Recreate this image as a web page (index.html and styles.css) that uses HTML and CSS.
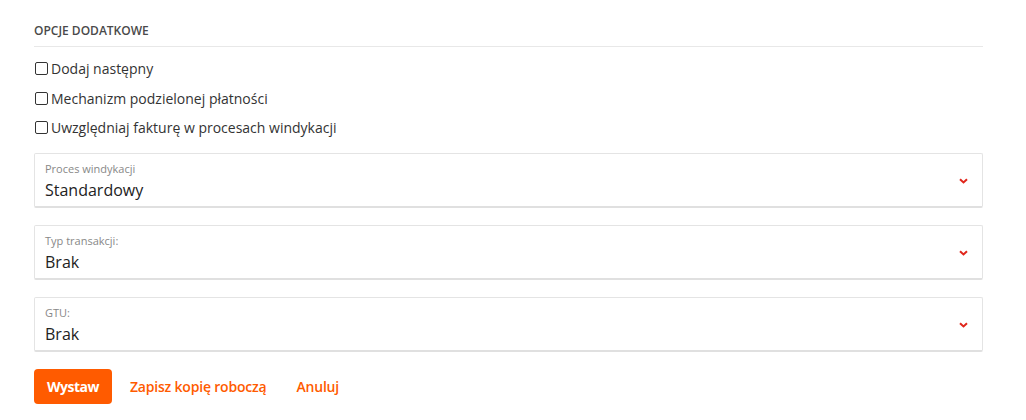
FILE: index.html
```html
<!DOCTYPE html>
<html lang="pl">
<head>
<meta charset="utf-8">
<link rel="stylesheet" href="styles.css">
</head>
<body>
<div class="panel">
  <h3 class="section-title">Opcje dodatkowe</h3>
  <div class="checks">
    <label class="check"><span class="box"></span>Dodaj następny</label>
    <label class="check"><span class="box"></span>Mechanizm podzielonej płatności</label>
    <label class="check"><span class="box"></span>Uwzględniaj fakturę w procesach windykacji</label>
  </div>
  <div class="selects">
    <div class="select">
      <div class="select-text">
        <div class="select-label">Proces windykacji</div>
        <div class="select-value">Standardowy</div>
      </div>
      <svg class="chev" width="9" height="6" viewBox="0 0 9 6"><path d="M1 1.2 L4.5 4.5 L8 1.2" fill="none" stroke="#e0261c" stroke-width="2"/></svg>
    </div>
    <div class="select">
      <div class="select-text">
        <div class="select-label">Typ transakcji:</div>
        <div class="select-value">Brak</div>
      </div>
      <svg class="chev" width="9" height="6" viewBox="0 0 9 6"><path d="M1 1.2 L4.5 4.5 L8 1.2" fill="none" stroke="#e0261c" stroke-width="2"/></svg>
    </div>
    <div class="select">
      <div class="select-text">
        <div class="select-label">GTU:</div>
        <div class="select-value">Brak</div>
      </div>
      <svg class="chev" width="9" height="6" viewBox="0 0 9 6"><path d="M1 1.2 L4.5 4.5 L8 1.2" fill="none" stroke="#e0261c" stroke-width="2"/></svg>
    </div>
  </div>
  <div class="actions">
    <button class="btn-primary">Wystaw</button>
    <a class="link-btn draft">Zapisz kopię roboczą</a>
    <a class="link-btn">Anuluj</a>
  </div>
</div>
</body>
</html>
```
FILE: styles.css
```css
* { box-sizing: border-box; }
html, body { margin: 0; padding: 0; background: #fff; }
body { font-family: "Open Sans", "Noto Sans", sans-serif; color: #333; }
.panel {
  width: 949px;
  margin-left: 34px;
  padding-top: 23px;
}
.section-title {
  margin: 0;
  font-size: 12px;
  line-height: 16px;
  font-weight: 600;
  text-transform: uppercase;
  color: #4a4a4a;
  padding-bottom: 7px;
  border-bottom: 1px solid #e8e8e8;
}
.checks {
  padding-top: 7px;
  display: flex;
  flex-direction: column;
}
.check {
  display: flex;
  align-items: center;
  height: 29.5px;
  font-size: 14px;
  color: #333;
}
.box {
  width: 13px;
  height: 13px;
  border: 1px solid #333;
  border-radius: 2px;
  margin-left: 1px;
  margin-right: 3px;
  background: #fff;
}
.selects {
  margin-top: 10px;
  display: flex;
  flex-direction: column;
  gap: 17px;
}
.select {
  height: 55px;
  border: 1px solid #e4e4e4;
  border-bottom: 2px solid #e0e0e0;
  border-radius: 2px;
  display: flex;
  align-items: center;
  padding: 0 14px 0 10px;
}
.select-text { flex: 1; padding-top: 2px; }
.select-label {
  font-size: 11px;
  line-height: 15px;
  color: #888;
  margin-bottom: 3px;
}
.select-value {
  font-size: 16px;
  line-height: 22px;
  color: #222;
}
.chev { display: block; margin-top: 2px; }
.actions {
  margin-top: 17px;
  display: flex;
  align-items: center;
}
.btn-primary {
  height: 35px;
  padding: 0 13px;
  border: none;
  border-radius: 4px;
  background: #ff5b00;
  color: #fff;
  font-family: "Open Sans", sans-serif;
  font-weight: 700;
  font-size: 14px;
  letter-spacing: -0.5px;
}
.link-btn {
  font-size: 14px;
  font-weight: 600;
  color: #ff5b00;
  letter-spacing: -0.2px;
}
.draft { margin-left: 18px; margin-right: 30px; }
```
